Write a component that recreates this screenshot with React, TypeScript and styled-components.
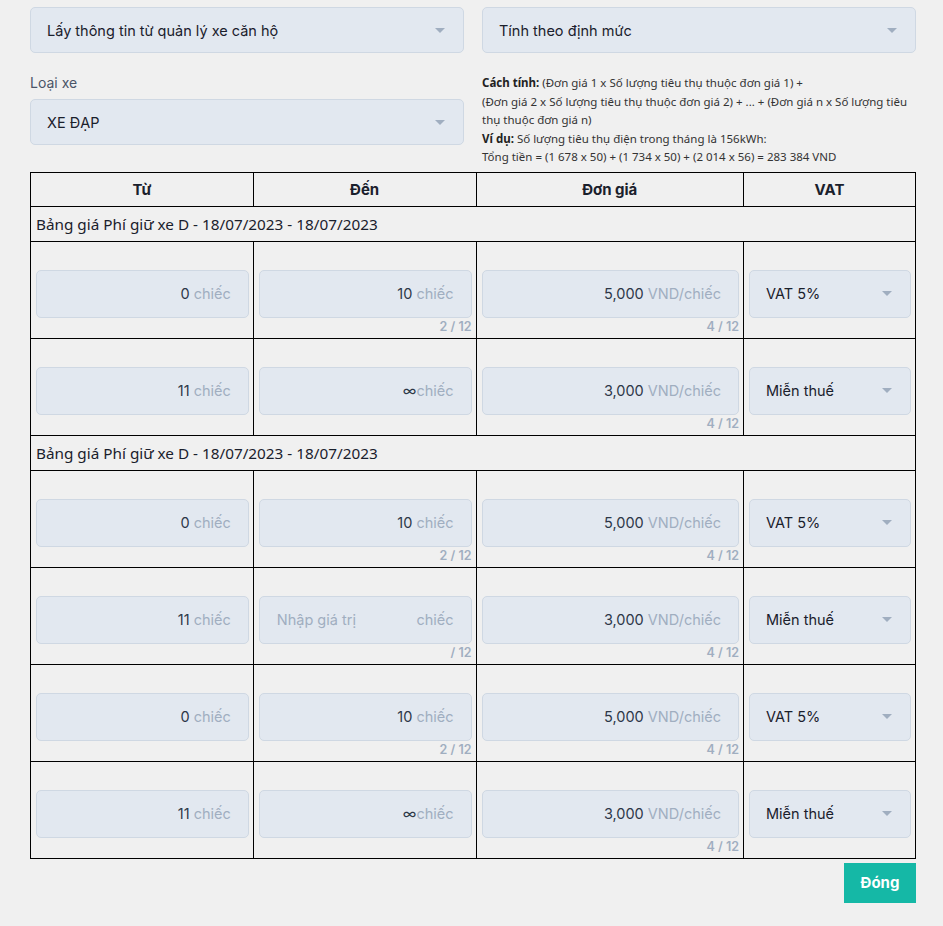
import React from 'react';
import styled, { createGlobalStyle } from 'styled-components';

const GlobalStyle = createGlobalStyle`
  html, body {
    margin: 0;
    padding: 0;
    background: #f0f0f0;
  }
  body {
    font-family: Inter, "Noto Sans", sans-serif;
    color: #1a202c;
  }
`;

const Page = styled.div`
  padding: 7px 27px 24px 30px;
`;

const TopGrid = styled.div`
  display: grid;
  grid-template-columns: 1fr 1fr;
  column-gap: 18px;
`;

const Column = styled.div`
  display: flex;
  flex-direction: column;
`;

const SelectBox = styled.div<{ $height?: number }>`
  height: ${({ $height }) => $height ?? 46}px;
  box-sizing: border-box;
  display: flex;
  align-items: center;
  justify-content: space-between;
  padding: 0 18px 0 16px;
  background: #e2e8f0;
  border: 1px solid #cfd8e3;
  border-radius: 5px;
  font-family: Inter, sans-serif;
  font-size: 14.5px;
  color: #1a202c;
`;

const Caret = styled.span`
  width: 0;
  height: 0;
  border-left: 5px solid transparent;
  border-right: 5px solid transparent;
  border-top: 5px solid #a0aec0;
`;

const FieldLabel = styled.div`
  margin-top: 20px;
  margin-bottom: 6px;
  font-family: Inter, sans-serif;
  font-size: 14px;
  line-height: 20px;
  color: #4a5568;
`;

const Formula = styled.div`
  margin-top: 21px;
  font-family: "Noto Sans", sans-serif;
  font-size: 11.5px;
  line-height: 18.5px;
  color: #333;
  padding-right: 6px;

  b {
    font-weight: 700;
    color: #222;
  }
`;

const Table = styled.table`
  margin-top: 5px;
  width: 100%;
  border-collapse: collapse;
  table-layout: fixed;
`;

const HeadCell = styled.th<{ $width: string }>`
  width: ${({ $width }) => $width};
  border: 1px solid #000;
  height: 33px;
  padding: 0;
  font-family: Inter, sans-serif;
  font-size: 15px;
  font-weight: 700;
  color: #1a202c;
  text-align: center;
`;

const GroupCell = styled.td`
  border: 1px solid #000;
  height: 34px;
  padding: 0 5px;
  font-family: "Noto Sans", sans-serif;
  font-size: 15.3px;
  color: #1a202c;
`;

const Cell = styled.td`
  border: 1px solid #000;
  padding: 28px 4px 4px 5px;
  vertical-align: top;
`;

const InputBox = styled.div`
  height: 48px;
  box-sizing: border-box;
  display: flex;
  align-items: center;
  padding: 0 17px;
  background: #e2e8f0;
  border: 1px solid #cfd8e3;
  border-radius: 5px;
  font-family: Inter, sans-serif;
  font-size: 14.5px;
`;

const Value = styled.span<{ $placeholder?: boolean }>`
  flex: 1;
  text-align: ${({ $placeholder }) => ($placeholder ? 'left' : 'right')};
  color: ${({ $placeholder }) => ($placeholder ? '#a0aec0' : '#2d3748')};
  white-space: pre;
`;

const Suffix = styled.span`
  color: #a0aec0;
  white-space: pre;
`;

const Counter = styled.div`
  height: 16px;
  line-height: 18px;
  text-align: right;
  font-family: Inter, sans-serif;
  font-size: 12.5px;
  font-weight: 600;
  color: #a0aec0;
`;

const Footer = styled.div`
  display: flex;
  justify-content: flex-end;
  margin-top: 4px;
`;

const CloseButton = styled.button`
  width: 72px;
  height: 40px;
  border: none;
  border-radius: 0;
  background: #15b8a6;
  color: #fff;
  font-family: Inter, sans-serif;
  font-size: 15px;
  font-weight: 700;
  cursor: pointer;
`;

type Row = {
  from: string;
  to: string;
  toCount: string;
  price: string;
  vat: string;
};

const groups: { title: string; rows: Row[] }[] = [
  {
    title: 'Bảng giá Phí giữ xe D - 18/07/2023 - 18/07/2023',
    rows: [
      { from: '0', to: '10', toCount: '2 / 12', price: '5,000', vat: 'VAT 5%' },
      { from: '11', to: '∞', toCount: '', price: '3,000', vat: 'Miễn thuế' },
    ],
  },
  {
    title: 'Bảng giá Phí giữ xe D - 18/07/2023 - 18/07/2023',
    rows: [
      { from: '0', to: '10', toCount: '2 / 12', price: '5,000', vat: 'VAT 5%' },
      { from: '11', to: '', toCount: ' / 12', price: '3,000', vat: 'Miễn thuế' },
      { from: '0', to: '10', toCount: '2 / 12', price: '5,000', vat: 'VAT 5%' },
      { from: '11', to: '∞', toCount: '', price: '3,000', vat: 'Miễn thuế' },
    ],
  },
];

const Amount: React.FC<{ value: string; suffix: string }> = ({ value, suffix }) => {
  if (value === '') {
    return (
      <InputBox>
        <Value $placeholder>Nhập giá trị</Value>
        <Suffix>{suffix}</Suffix>
      </InputBox>
    );
  }
  return (
    <InputBox>
      <Value>{value === '∞' ? value : `${value} `}</Value>
      <Suffix>{suffix}</Suffix>
    </InputBox>
  );
};

const App: React.FC = () => {
  return (
    <Page>
      <GlobalStyle />
      <TopGrid>
        <Column>
          <SelectBox>
            Lấy thông tin từ quản lý xe căn hộ
            <Caret />
          </SelectBox>
          <FieldLabel>Loại xe</FieldLabel>
          <SelectBox>
            XE ĐẠP
            <Caret />
          </SelectBox>
        </Column>
        <Column>
          <SelectBox>
            Tính theo định mức
            <Caret />
          </SelectBox>
          <Formula>
            <b>Cách tính:</b> (Đơn giá 1 x Số lượng tiêu thụ thuộc đơn giá 1) +
            <br />
            (Đơn giá 2 x Số lượng tiêu thụ thuộc đơn giá 2) + ... + (Đơn giá n x Số lượng tiêu thụ thuộc đơn giá n)
            <br />
            <b>Ví dụ:</b> Số lượng tiêu thụ điện trong tháng là 156kWh:
            <br />
            Tổng tiền = (1 678 x 50) + (1 734 x 50) + (2 014 x 56) = 283 384 VND
          </Formula>
        </Column>
      </TopGrid>

      <Table>
        <thead>
          <tr>
            <HeadCell $width="25.17%">Từ</HeadCell>
            <HeadCell $width="25.17%">Đến</HeadCell>
            <HeadCell $width="30.25%">Đơn giá</HeadCell>
            <HeadCell $width="19.41%">VAT</HeadCell>
          </tr>
        </thead>
        <tbody>
          {groups.map((group, gi) => (
            <React.Fragment key={gi}>
              <tr>
                <GroupCell colSpan={4}>{group.title}</GroupCell>
              </tr>
              {group.rows.map((row, ri) => (
                <tr key={ri}>
                  <Cell>
                    <Amount value={row.from} suffix="chiếc" />
                    <Counter />
                  </Cell>
                  <Cell>
                    <Amount value={row.to} suffix="chiếc" />
                    <Counter>{row.toCount}</Counter>
                  </Cell>
                  <Cell>
                    <Amount value={row.price} suffix="VND/chiếc" />
                    <Counter>4 / 12</Counter>
                  </Cell>
                  <Cell>
                    <SelectBox $height={48}>
                      {row.vat}
                      <Caret />
                    </SelectBox>
                    <Counter />
                  </Cell>
                </tr>
              ))}
            </React.Fragment>
          ))}
        </tbody>
      </Table>

      <Footer>
        <CloseButton>Đóng</CloseButton>
      </Footer>
    </Page>
  );
};

export default App;
